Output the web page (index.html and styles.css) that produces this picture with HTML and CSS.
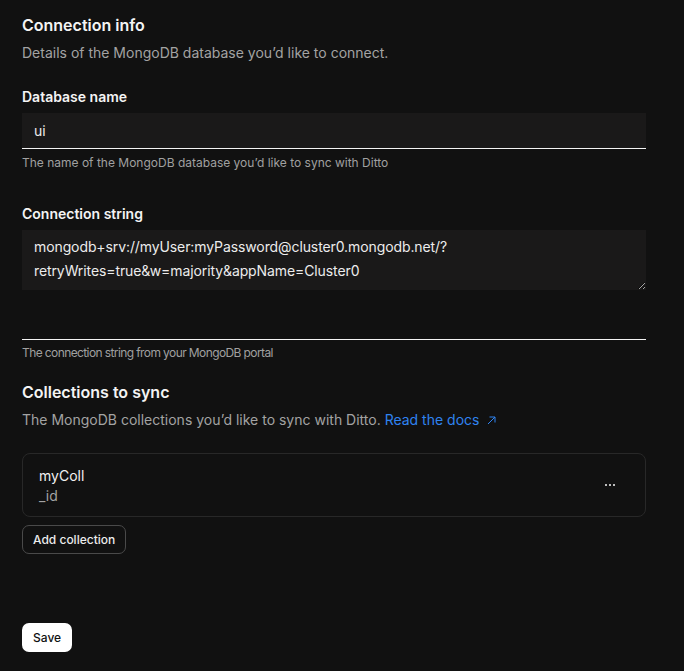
FILE: index.html
```html
<!DOCTYPE html>
<html lang="en">
<head>
<meta charset="utf-8">
<title>Connection info</title>
<link rel="stylesheet" href="styles.css">
</head>
<body>
<main class="page">
  <section class="section">
    <h2 class="title">Connection info</h2>
    <p class="subtitle">Details of the MongoDB database you’d like to connect.</p>

    <div class="field field-first">
      <label class="label" for="db">Database name</label>
      <div class="input-wrap">
        <input id="db" class="input" type="text" value="ui">
      </div>
      <p class="help">The name of the MongoDB database you’d like to sync with Ditto</p>
    </div>

    <div class="field">
      <label class="label" for="conn">Connection string</label>
      <div class="textarea-wrap">
        <textarea id="conn" class="textarea">mongodb+srv://myUser:myPassword@cluster0.mongodb.net/?retryWrites=true&amp;w=majority&amp;appName=Cluster0</textarea>
      </div>
      <p class="help help-tight">The connection string from your MongoDB portal</p>
    </div>
  </section>

  <section class="section section-collections">
    <h2 class="title">Collections to sync</h2>
    <p class="subtitle">The MongoDB collections you’d like to sync with Ditto. <a class="link" href="#">Read the docs <svg class="ext" width="9" height="9" viewBox="0 0 9 9" aria-hidden="true"><path d="M1 8 L8 1 M2.5 1 H8 V6.5" fill="none" stroke="currentColor" stroke-width="1"/></svg></a></p>

    <div class="card">
      <div class="card-text">
        <div class="card-name">myColl</div>
        <div class="card-key">_id</div>
      </div>
      <button class="more" type="button" aria-label="More">
        <svg width="10" height="2" viewBox="0 0 10 2" aria-hidden="true"><rect x="0" y="0" width="2" height="2" fill="currentColor"/><rect x="4" y="0" width="2" height="2" fill="currentColor"/><rect x="8" y="0" width="2" height="2" fill="currentColor"/></svg>
      </button>
    </div>

    <button class="btn btn-outline" type="button">Add collection</button>
  </section>

  <div class="actions">
    <button class="btn btn-primary" type="button">Save</button>
  </div>
</main>
</body>
</html>
```

FILE: styles.css
```css
html, body {
  margin: 0;
  padding: 0;
  background: #111111;
}

body {
  font-family: Inter, "Noto Sans", "Liberation Sans", sans-serif;
  color: #f2f2f2;
  -webkit-font-smoothing: antialiased;
}

.page {
  width: 624px;
  padding: 0 38px 0 22px;
  display: flex;
  flex-direction: column;
}

.section {
  display: flex;
  flex-direction: column;
}

.title {
  margin: 13px 0 0;
  font-size: 16px;
  line-height: 24px;
  font-weight: 600;
  color: #f4f4f4;
}

.subtitle {
  margin: 6px 0 0;
  font-size: 14px;
  line-height: 20px;
  color: #a3a3a3;
}

.field {
  display: flex;
  flex-direction: column;
  margin-top: 33px;
}

.field-first {
  margin-top: 24px;
}

.label {
  font-size: 14px;
  line-height: 20px;
  font-weight: 600;
  color: #f4f4f4;
}

.input-wrap {
  margin-top: 6px;
  background: #1a1919;
  border-bottom: 1px solid #f4f4f4;
  height: 35px;
  display: flex;
}

.input {
  flex: 1;
  border: 0;
  outline: 0;
  background: transparent;
  color: #ececec;
  font-family: inherit;
  font-size: 14px;
  padding: 0 12px;
  margin: 0;
}

.help {
  margin: 6px 0 0;
  font-size: 12px;
  line-height: 16px;
  color: #a0a0a0;
}

.help-tight {
  margin-top: 5px;
  letter-spacing: -0.6px;
}

.textarea-wrap {
  margin-top: 6px;
  height: 109px;
  border-bottom: 1px solid #f4f4f4;
  display: flex;
  flex-direction: column;
}

.textarea {
  display: block;
  height: 60px;
  box-sizing: border-box;
  width: 100%;
  margin: 0;
  border: 0;
  outline: 0;
  background: #1a1919;
  color: #ececec;
  font-family: inherit;
  font-size: 14px;
  line-height: 24px;
  letter-spacing: -0.1px;
  padding: 5px 12px 7px;
  resize: vertical;
  color-scheme: dark;
}

.section-collections .title {
  margin-top: 19px;
}

.section-collections .subtitle {
  margin-top: 6px;
}

.link {
  color: #2f83f0;
  text-decoration: none;
}

.ext {
  margin-left: 4px;
  vertical-align: 0px;
}

.card {
  margin-top: 23px;
  border: 1px solid #282828;
  border-radius: 8px;
  padding: 11px 16px 10px;
  display: flex;
  align-items: center;
  justify-content: space-between;
}

.card-text {
  display: flex;
  flex-direction: column;
}

.card-name {
  font-size: 14px;
  line-height: 21px;
  color: #f0f0f0;
}

.card-key {
  font-size: 14px;
  line-height: 20px;
  color: #a3a3a3;
}

.more {
  background: transparent;
  border: 0;
  padding: 6px 4px;
  margin-right: 10px;
  color: #bdbdbd;
  display: flex;
  align-items: center;
  margin-top: -1px;
}

.btn {
  font-family: inherit;
  font-size: 12px;
  font-weight: 500;
  line-height: 16px;
  border-radius: 7px;
  height: 29px;
  cursor: pointer;
  align-self: flex-start;
}

.btn-outline {
  margin-top: 8px;
  background: transparent;
  color: #ececec;
  border: 1px solid #4a4a4a;
  padding: 0 10px;
}

.actions {
  margin-top: 69px;
  display: flex;
}

.btn-primary {
  background: #ffffff;
  color: #111111;
  border: 0;
  padding: 0 11px;
}
```
